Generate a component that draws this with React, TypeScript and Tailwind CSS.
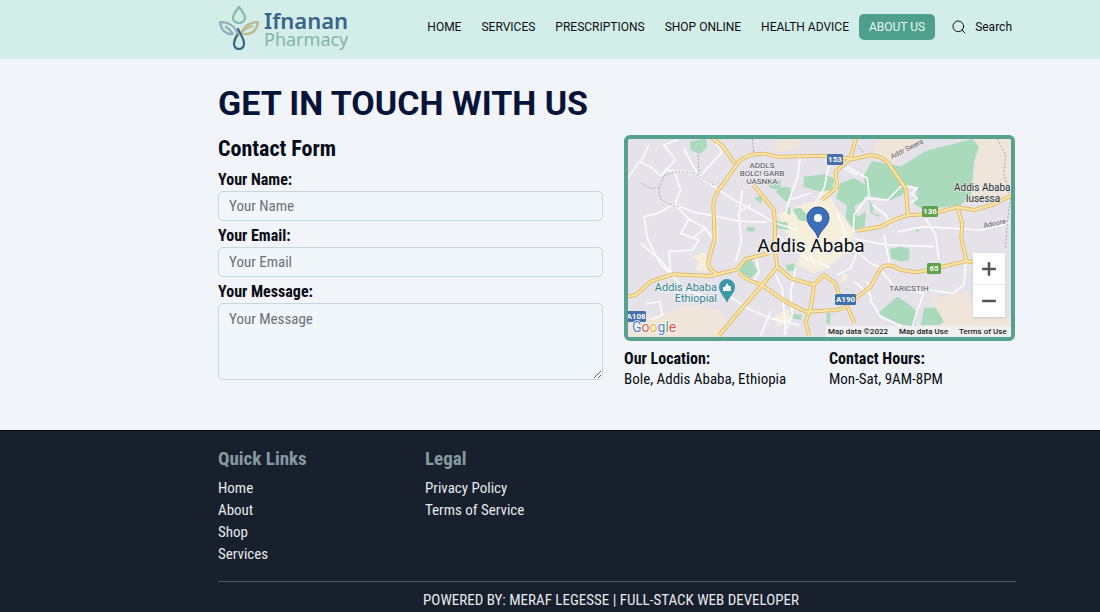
import { Search, Plus, Minus } from 'lucide-react';

const navLinks = ['HOME', 'SERVICES', 'PRESCRIPTIONS', 'SHOP ONLINE', 'HEALTH ADVICE'];
const quickLinks = ['Home', 'About', 'Shop', 'Services'];
const legalLinks = ['Privacy Policy', 'Terms of Service'];

// Minor streets, drawn as thin white lines
const streets = [
  'M12 130 L45 80 L80 95 L110 122 L155 75 L120 30 L165 12',
  'M50 80 L75 30 M120 105 L200 112 L228 124 L295 50 L275 25',
  'M180 40 L205 90 L228 124 L285 165 L330 195 L405 235 L455 265 L520 285',
  'M152 115 L170 165 L152 208 L195 252 L245 280 L268 315',
  'M152 208 L100 235 L60 245 L70 310 L108 385 L138 415',
  'M152 208 L210 232 L275 243 L340 258 L430 262',
  'M195 252 L170 295 L225 315 L205 345 L135 350 L140 415',
  'M140 415 L115 380 L50 325 M245 280 L205 310',
  'M355 165 L345 240 L352 320 L335 380 M345 230 L380 210',
  'M530 60 L520 130 L495 195 L485 240 M615 90 L600 160 L570 210 M495 195 L560 175',
  'M670 95 L730 130 L735 180 L690 240 L688 290 M660 100 L700 120',
  'M720 190 L790 195 L835 150 L880 160 L862 175 L880 190 L860 205 M745 210 L785 240 L800 270',
  'M820 290 L900 275 L1070 285 L1155 265 M905 250 L935 300 L945 375',
  'M690 310 L760 325 L800 330 L930 335 M780 300 L800 400',
  'M640 340 L700 350 L740 385 L775 400 M700 350 L680 400 L640 420',
  'M775 410 L810 455 L900 475 L880 525 L860 595',
  'M1025 385 L1020 450 L985 475 L915 465',
  'M730 440 L742 500 L770 545 L835 575 M690 440 L740 480',
  'M310 480 L380 525 L440 550 L525 570 M370 495 L415 450 L450 410',
  'M515 400 L500 470 L505 540 L480 600 M455 420 L475 460 L485 600',
  'M145 420 L180 465 L250 485 M65 507 L108 500 L115 540 L80 555',
  'M640 230 L665 300 L620 340 M560 330 L560 370 L620 400',
  'M395 360 L405 410 L385 450 M460 300 L500 335 L560 380 M440 530 L410 600',
];

// Main roads, drawn twice to get the darker casing
const roads = [
  'M265 10 L295 32 L332 85',
  'M280 418 Q250 400 253 380 L272 310 L268 210 Q270 180 295 150 L345 80 Q370 55 420 56 L460 65 L600 62 L690 72 L740 60 Q785 65 800 95 L845 160 L852 240',
  'M388 150 L450 225 L453 280 L452 340 L460 395',
  'M12 485 L35 480 L80 440 L145 418 L260 423 L340 403 L365 372 L435 355',
  'M348 412 Q350 430 410 448 L485 500 L545 530 L640 525 L668 515',
  'M285 602 L345 530 L415 450 L460 395 L500 430 L570 450 L600 420 L635 445 L645 480',
  'M570 450 L560 520 L545 560 L555 602',
  'M668 510 L740 455 L770 400 Q790 380 830 405 L880 412 L925 402 L1030 378 L1060 385',
  'M852 240 L810 255 L770 275 L700 287',
  'M852 240 L920 238 L1000 216 L1050 225 L1110 208 L1165 180',
  'M1000 216 L1015 265 L1012 310 L1028 378',
  'M695 12 L680 70 L635 110 L640 155 L595 195',
  'M670 515 L692 565',
];

const parks = [
  'M198 20 L245 10 L250 35 L228 58 L200 45 Z',
  'M745 78 L830 95 L905 48 L1045 12 L1065 35 L1050 80 L1042 180 L1010 210 L900 225 L868 205 L882 160 L855 150 L835 180 L800 195 L725 180 L720 120 Z',
  'M650 145 L690 130 L735 155 L735 185 L690 215 L700 245 L725 230 L722 275 L690 285 L665 250 L668 210 L635 190 Z',
  'M540 125 L600 118 L632 130 L625 165 L590 170 L538 155 Z',
  'M455 170 L475 155 L500 158 L500 195 L485 200 Z',
  'M390 190 L415 180 L412 205 Z',
  'M425 140 L470 135 L470 165 L440 160 Z',
  'M485 220 L500 218 L500 238 L485 238 Z M505 222 L530 218 L550 240 L545 260 L525 255 Z',
  'M450 258 L490 262 L495 285 L460 280 Z',
  'M358 372 L378 362 L400 410 L380 430 L345 410 Z',
  'M485 390 L512 385 L510 408 L490 408 Z',
  'M798 342 L830 335 L857 342 L855 375 L830 380 L800 370 Z',
  'M762 535 L820 485 L850 505 L880 530 L872 575 L820 565 Z',
  'M900 518 L935 518 L960 560 L945 570 L890 570 Z',
  'M500 535 L535 540 L530 555 L505 550 Z',
  'M735 195 L750 215 L745 235 L770 240 L780 225 L765 245 L740 235 Z',
  'M370 275 L395 278 L390 290 L368 288 Z M870 282 L888 284 L880 292 Z',
  'M608 535 L620 535 L618 570 L608 565 Z',
];

const builtUp = [
  'M10 550 L100 545 L190 510 L290 525 L310 570 L280 606 L10 606 Z',
  'M455 10 L530 10 L520 45 L450 50 Z',
  'M760 10 L900 10 L810 80 L745 75 Z',
  'M1045 10 L1166 10 L1166 200 L1040 185 L1065 35 Z',
  'M920 490 L1030 470 L1060 545 L1166 550 L1166 606 L945 580 L955 550 Z',
];

const blocks = [
  'M460 240 L540 205 L620 190 L690 290 L680 340 L610 400 L570 415 L520 390 L540 330 L490 300 Z',
  'M205 365 L245 352 L250 410 L215 405 L225 380 Z',
  'M580 165 L625 130 L635 170 L600 190 Z',
  'M450 545 L495 520 L500 560 L460 575 Z',
  'M260 290 L285 275 L280 320 Z',
  'M655 420 L670 415 L665 440 L650 440 Z',
];

function Logo() {
  return (
    <a href="#home" className="flex items-center gap-1" aria-label="Ifnanan Pharmacy">
      <svg width="42" height="46" viewBox="0 0 42 46" fill="none" strokeWidth="2.2" strokeLinejoin="round" strokeLinecap="round">
        <path d="M21 2 C17 7 15 10 15 13 C15 16 18 18 21 18 C24 18 27 16 27 13 C27 9 24 6 21 2 Z" stroke="#83bda6" />
        <path d="M20 29 C17 21 12 17 2 17 C3 25 8 30 15 29 C13 26 10 23 8 22" stroke="#92afb8" />
        <path d="M23 29 C26 21 31 17 40 17 C39 25 34 30 26 29" stroke="#bfb68b" />
        <path d="M34 21 C25 24 18 31 17 37" stroke="#bfb68b" />
        <path d="M20 24 C23 30 26 34 26 38 C26 42 24 44 21 44 C18 44 16 42 16 38 C16 35 17 33 19 30" stroke="#38658a" />
      </svg>
      <span className="flex flex-col pt-1 font-['Noto_Sans',sans-serif]">
        <span className="text-[22px] leading-[19px] font-semibold text-[#386589]">Ifnanan</span>
        <span className="text-[18px] leading-[19px] text-[#83b6a8]">Pharmacy</span>
      </span>
    </a>
  );
}

function Shield({ x, y, w, color, label }: { x: number; y: number; w: number; color: string; label: string }) {
  return (
    <g>
      <rect x={x} y={y} width={w} height="11" rx="1.5" fill={color} />
      <text x={x + w / 2} y={y + 8} textAnchor="middle" fontSize="8" fontWeight="700" fill="#fff">
        {label}
      </text>
    </g>
  );
}

function LocationMap() {
  return (
    <div className="relative overflow-hidden rounded-md border-4 border-[#57a18f]">
      <svg viewBox="628 139 383 198" className="block w-full font-[Roboto,sans-serif]" role="img" aria-label="Map of Addis Ababa">
        <rect x="628" y="139" width="383" height="198" fill="#e5e3e9" />
        <g transform="translate(624 135) scale(0.3333)" fill="none" strokeLinejoin="round">
          {builtUp.map((d) => <path key={d} d={d} fill="#efe5da" />)}
          {blocks.map((d) => <path key={d} d={d} fill="#f6efdc" />)}
          {parks.map((d) => <path key={d} d={d} fill="#a9dabb" />)}
          {streets.map((d) => <path key={d} d={d} stroke="#fbfbfd" strokeWidth="5" />)}
          <g stroke="#a6a9b0" strokeWidth="3" strokeDasharray="6 5">
            <path d="M50 145 L80 160 L105 158 L120 122 L155 110 L200 112 L228 124 L270 150" />
            <path d="M105 158 L108 190 L130 205 L165 215 M222 60 L225 120" />
            <path d="M1120 12 L1145 60 L1140 120 L1160 190 L1150 260 L1145 340 M385 12 L390 60 M700 30 L720 55" />
          </g>
          {roads.map((d) => <path key={d} d={d} stroke="#e3bd64" strokeWidth="12" />)}
          {roads.map((d) => <path key={d} d={d} stroke="#fbe6ad" strokeWidth="6" />)}
        </g>

        <Shield x={827} y={154} w={16} color="#4670ae" label="153" />
        <Shield x={922} y={206} w={16} color="#5fa34b" label="136" />
        <Shield x={927} y={263} w={14} color="#5fa34b" label="65" />
        <Shield x={835} y={294} w={21} color="#3f70ab" label="A190" />
        <Shield x={626} y={311} w={20} color="#4670ae" label="A108" />

        <g fontSize="8" fill="#4d4f57" stroke="#eeedf1" strokeWidth="1.5" paintOrder="stroke" textAnchor="middle">
          <text x="762" y="168">ADDLS</text>
          <text x="762" y="176">BOLC! GARB</text>
          <text x="762" y="184">UASNKA</text>
          <text x="909" y="291">TARICSTIH</text>
        </g>
        <g fontSize="7" fill="#5d6167">
          <text transform="translate(892 159) rotate(-27)">Addr Swers</text>
          <text transform="translate(984 228) rotate(-12)">Adoore</text>
        </g>
        <g fontSize="10" fill="#2c2e33" stroke="#e8ece6" strokeWidth="1.5" paintOrder="stroke">
          <text x="954" y="191">Addis Ababa</text>
          <text x="966" y="202">lusessa</text>
        </g>
        <g fontSize="11" fill="#34808c" stroke="#f0f0f4" strokeWidth="2" paintOrder="stroke" textAnchor="end">
          <text x="717" y="291">Addis Ababa</text>
          <text x="717" y="302">Ethiopial</text>
        </g>
        <path d="M727 303 C725 297 719 293 719 287 A8 8 0 0 1 735 287 C735 293 729 297 727 303 Z" fill="#3b98a6" />
        <path d="M723 291 V287 H725 L727 283 L729 286 H731 V291 Z" fill="#fff" />

        <path d="M818 238 C816 230 807 226 807 218 A11 11 0 0 1 829 218 C829 226 820 230 818 238 Z" fill="#3c6fb9" stroke="#2b5698" strokeWidth="1" />
        <circle cx="818" cy="218" r="4" fill="#fff" />
        <text x="811" y="252" textAnchor="middle" fontSize="19" fill="#0a0a0a" stroke="#f3f3f6" strokeWidth="2" paintOrder="stroke">
          Addis Ababa
        </text>

        <text x="632" y="332" fontSize="14" stroke="#fff" strokeWidth="1.5" paintOrder="stroke">
          <tspan fill="#5282d4">G</tspan>
          <tspan fill="#d65a50">o</tspan>
          <tspan fill="#dfb13d">o</tspan>
          <tspan fill="#5282d4">g</tspan>
          <tspan fill="#52a468">l</tspan>
          <tspan fill="#d65a50">e</tspan>
        </text>
        <rect x="826" y="326" width="185" height="11" fill="#f3f2f3" fillOpacity="0.8" />
        <g fontSize="8" fontWeight="500" fill="#1a1a1a">
          <text x="828" y="334">Map data ©2022</text>
          <text x="899" y="334">Map data Use</text>
          <text x="959" y="334">Terms of Use</text>
        </g>
      </svg>
      <div className="absolute right-1.5 bottom-5 flex w-8 flex-col divide-y divide-gray-200 bg-white text-[#555] shadow">
        <button type="button" aria-label="Zoom in" className="flex h-8 items-center justify-center">
          <Plus size={20} strokeWidth={3} />
        </button>
        <button type="button" aria-label="Zoom out" className="flex h-8 items-center justify-center">
          <Minus size={20} strokeWidth={3} />
        </button>
      </div>
    </div>
  );
}

const labelClass = 'block text-[16px] leading-[22px] font-bold';
const fieldClass =
  'block w-full rounded-[5px] border border-[#c5d8db] bg-[#f0f6f9] px-2.5 text-[15px] placeholder:text-[#6a7177] focus:outline-none';

function ContactForm() {
  return (
    <form>
      <h2 className="text-[22px] leading-7 font-bold text-[#050b18]">Contact Form</h2>
      <div className="mt-1.5 flex flex-col gap-1">
        <div>
          <label htmlFor="name" className={labelClass}>Your Name:</label>
          <input id="name" type="text" placeholder="Your Name" className={`${fieldClass} h-[30px]`} />
        </div>
        <div>
          <label htmlFor="email" className={labelClass}>Your Email:</label>
          <input id="email" type="email" placeholder="Your Email" className={`${fieldClass} h-[30px]`} />
        </div>
        <div>
          <label htmlFor="message" className={labelClass}>Your Message:</label>
          <textarea id="message" placeholder="Your Message" className={`${fieldClass} h-[77px] py-1`} />
        </div>
      </div>
    </form>
  );
}

export default function App() {
  return (
    <div className="flex min-h-screen flex-col bg-[#f1f5f9] font-['Roboto_Condensed',Roboto,sans-serif] text-[#0a0d14]">
      <header className="flex h-[59px] items-center justify-between bg-[#d3ede8] pr-[88px] pb-1 pl-[218px] font-[Roboto,sans-serif]">
        <Logo />
        <nav className="flex items-center pb-px text-[12px] leading-[26px] whitespace-nowrap">
          {navLinks.map((label) => (
            <a key={label} href="#" className="px-2.5">{label}</a>
          ))}
          <a href="#about" className="rounded-[5px] bg-[#4f9f8d] px-2.5 text-[#eaf8f4]">ABOUT US</a>
          <button type="button" className="ml-4 flex items-center gap-2">
            <Search size={16} strokeWidth={1.5} />
            Search
          </button>
        </nav>
      </header>

      <main className="grow pt-[22px] pr-[85px] pb-10 pl-[218px]">
        <h1 className="font-[Roboto,sans-serif] text-[34px] leading-[44px] font-bold text-[#081338]">GET IN TOUCH WITH US</h1>
        <div className="mt-2.5 grid grid-cols-[385fr_391fr] gap-[21px]">
          <ContactForm />
          <section>
            <LocationMap />
            <div className="mt-2 grid grid-cols-[205fr_186fr] text-[15px] leading-[20px]">
              <div>
                <h3 className="text-[16px] leading-[20px] font-bold">Our Location:</h3>
                <p>Bole, Addis Ababa, Ethiopia</p>
              </div>
              <div>
                <h3 className="text-[16px] leading-[20px] font-bold">Contact Hours:</h3>
                <p>Mon-Sat, 9AM-8PM</p>
              </div>
            </div>
          </section>
        </div>
      </main>

      <footer className="border-t border-[#05090f] bg-[#17202c] pt-4 pr-[84px] pl-[218px] text-[#e6e9ee]">
        <div className="grid grid-cols-[207fr_591fr] pb-4 text-[15px] leading-[22px]">
          <div>
            <h4 className="mb-1.5 text-[19px] leading-6 font-bold text-[#8599a2]">Quick Links</h4>
            <ul>
              {quickLinks.map((label) => (
                <li key={label}><a href="#">{label}</a></li>
              ))}
            </ul>
          </div>
          <div>
            <h4 className="mb-1.5 text-[19px] leading-6 font-bold text-[#8599a2]">Legal</h4>
            <ul>
              {legalLinks.map((label) => (
                <li key={label}><a href="#">{label}</a></li>
              ))}
            </ul>
          </div>
        </div>
        <p className="border-t border-[#4c555f] pt-1.5 pr-3 text-center text-[15px] leading-6">
          POWERED BY: MERAF LEGESSE | FULL-STACK WEB DEVELOPER
        </p>
      </footer>
    </div>
  );
}
